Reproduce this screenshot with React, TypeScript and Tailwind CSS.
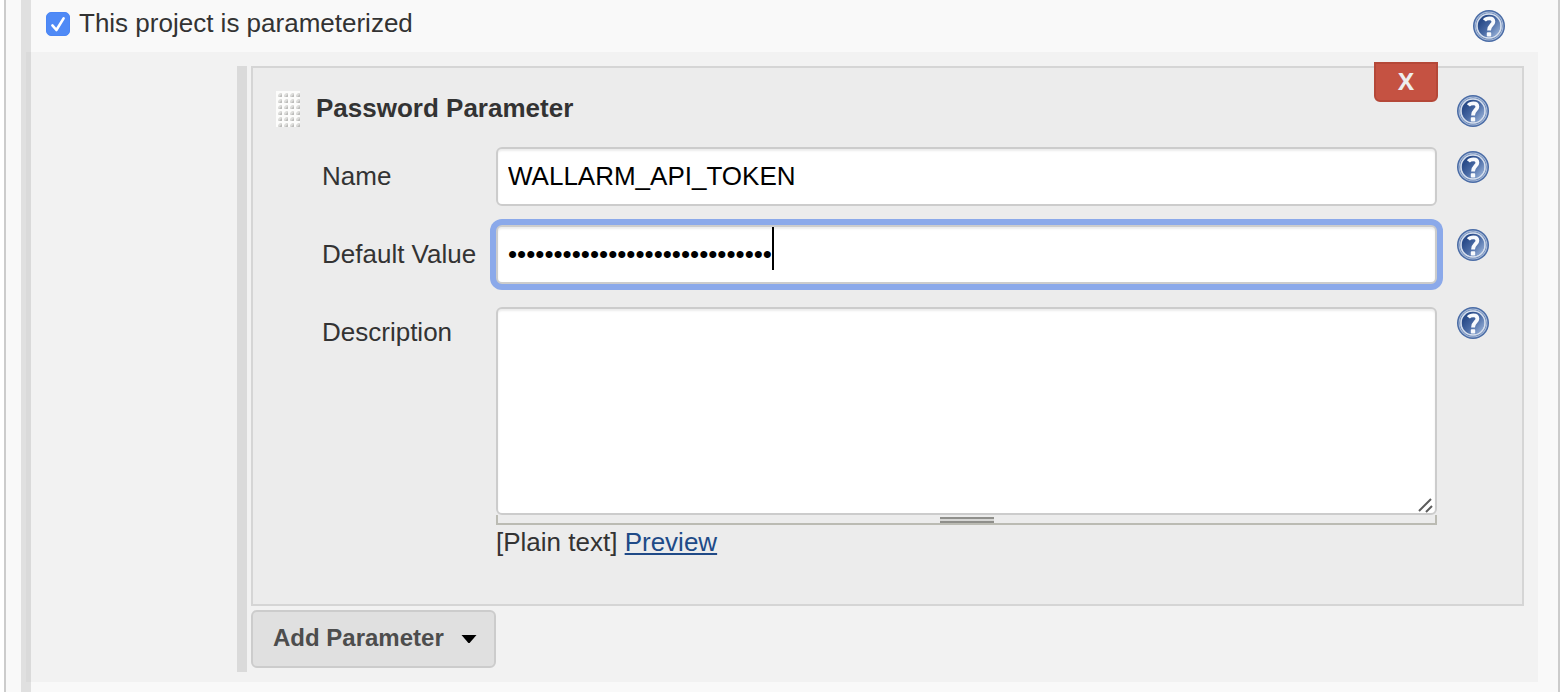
import { useState } from "react";
import type { ReactNode } from "react";

function HelpButton({ label, id }: { label: string; id: string }) {
  return (
    <button type="button" aria-label={label} className="block size-8 shrink-0">
      <svg viewBox="0 0 32 32" className="block size-8" aria-hidden="true">
        <defs>
          <linearGradient id={id} x1="0.1" y1="0.2" x2="0.9" y2="0.9">
            <stop offset="0.1" stopColor="#2a4c8a" />
            <stop offset="0.5" stopColor="#4a6ba5" />
            <stop offset="1" stopColor="#94aed6" />
          </linearGradient>
        </defs>
        <circle cx="16" cy="16" r="16" fill="#4a6ca6" />
        <circle cx="16" cy="16" r="13.9" fill="none" stroke="#a9bbd8" strokeWidth="1.2" />
        <circle cx="16" cy="16" r="12.9" fill="none" stroke="#7d97c2" strokeWidth="1" />
        <circle cx="16" cy="16" r="11.9" fill="none" stroke="#d6dfed" strokeWidth="1.8" />
        <circle cx="16" cy="16" r="11.2" fill={`url(#${id})`} />
        <path
          d="M11.4 10.4C12.6 8.8 14.6 8.4 16.4 8.4C19.2 8.4 20.4 9.9 20.4 11.7C20.4 14.9 16 15.2 16 20.4"
          fill="none"
          stroke="#f8fafd"
          strokeWidth="3.8"
        />
        <rect x="13.8" y="22.2" width="4.4" height="4.4" rx="0.8" fill="#f8fafd" />
      </svg>
    </button>
  );
}

function DragHandle() {
  const dots: ReactNode[] = [];
  for (let row = 0; row < 6; row++) {
    for (let col = 0; col < 4; col++) {
      const x = col * 6;
      const y = row * 6;
      dots.push(
        <g key={`${row}-${col}`}>
          <path d={`M${x + 2} ${y + 6}V${y + 4}L${x + 4} ${y + 2}H${x + 6}V${y + 6}Z`} fill="#dddddb" />
          <path d={`M${x + 3} ${y + 6}L${x + 6} ${y + 3}V${y + 6}Z`} fill="#bdbdbb" />
        </g>
      );
    }
  }
  return (
    <svg viewBox="0 0 24 36" className="h-9 w-6 shrink-0 cursor-move" aria-hidden="true">
      <rect width="24" height="36" fill="#fcfcfb" />
      {dots}
    </svg>
  );
}

function Field({ id, label, children }: { id: string; label: string; children: ReactNode }) {
  return (
    <div className="flex items-start">
      <label htmlFor={id} className="w-[174px] shrink-0 pt-3.5 leading-[30px]">
        {label}
      </label>
      <div className="min-w-0 flex-1">{children}</div>
      <div className="ml-5 pt-1">
        <HelpButton label={`Help for feature: ${label}`} id={`help-${id}`} />
      </div>
    </div>
  );
}

const box =
  "block w-full rounded-md border-2 border-[#cccccc] bg-white px-2.5 text-[26px] text-black shadow-[inset_0_2px_2px_rgba(0,0,0,0.075)] outline-none";

export default function App() {
  const [enabled, setEnabled] = useState(true);
  const [name, setName] = useState("WALLARM_API_TOKEN");
  const [secret, setSecret] = useState("x".repeat(29));
  const [description, setDescription] = useState("");

  return (
    <main className="min-h-screen bg-white pr-0.5 pl-1 font-['Liberation_Sans',Arial,sans-serif] text-[26px] text-[#333333]">
      <div className="flex min-h-screen border-x-2 border-[#cccccc] bg-[#f9f9f9] pl-[15px]">
        <div className="min-w-0 flex-1 border-l-10 border-[#e0e0e0] pr-5">
          <div className="flex h-13 items-start justify-between pr-[33px] pl-[15px]">
            <label className="flex items-start gap-[9px] pt-2 leading-[30px]">
              <span className="mt-1 grid size-6 shrink-0">
                <input
                  type="checkbox"
                  checked={enabled}
                  onChange={(e) => setEnabled(e.target.checked)}
                  className="peer col-start-1 row-start-1 size-6 appearance-none rounded-[5px] border border-[#b5b5b5] bg-white checked:border-[#4a86f5] checked:bg-[#4f8af6]"
                />
                <svg
                  viewBox="0 0 24 24"
                  className="pointer-events-none invisible col-start-1 row-start-1 size-6 peer-checked:visible"
                  aria-hidden="true"
                >
                  <path
                    d="M6.4 13.4L10.4 18L17.6 6.4"
                    fill="none"
                    stroke="#ffffff"
                    strokeWidth="2.6"
                    strokeLinecap="round"
                    strokeLinejoin="round"
                  />
                </svg>
              </span>
              This project is parameterized
            </label>
            <div className="pt-2.5">
              <HelpButton label="Help for feature: This project is parameterized" id="help-project" />
            </div>
          </div>

          <div className="-ml-[5px] border-l-5 border-[#dadada] bg-[#f2f2f2] pt-3.5 pr-3.5 pb-2.5 pl-[206px]">
            <div className="border-l-10 border-[#dadada] pb-1 pl-1">
              <section className="relative border-2 border-[#d5d5d5] bg-[#ececec] pt-[23px] pr-[33px] pb-[46px] pl-[23px]">
                <button
                  type="button"
                  aria-label="Delete parameter"
                  className="absolute -top-1.5 right-[84px] h-10 w-16 rounded-b-md border-2 border-[#b54838] bg-[#c55242] pb-0.5 font-['Open_Sans',sans-serif] text-2xl leading-8 font-bold text-[#eeeeee]"
                >
                  X
                </button>

                <div className="flex items-start">
                  <DragHandle />
                  <h2 className="ml-4 flex-1 pt-0.5 leading-[30px] font-bold">Password Parameter</h2>
                  <div className="pt-1">
                    <HelpButton label="Help for feature: Password Parameter" id="help-parameter" />
                  </div>
                </div>

                <div className="mt-5 flex flex-col gap-[19px] pl-[46px]">
                  <Field id="name" label="Name">
                    <input
                      id="name"
                      type="text"
                      value={name}
                      onChange={(e) => setName(e.target.value)}
                      className={`${box} h-[59px]`}
                    />
                  </Field>

                  <Field id="default" label="Default Value">
                    <div className="relative">
                      <input
                        id="default"
                        type="password"
                        value={secret}
                        onChange={(e) => setSecret(e.target.value)}
                        className={`${box} h-[59px] ring-6 ring-[#8ba9ea] caret-transparent`}
                      />
                      <span className="pointer-events-none absolute top-0.5 left-[276px] h-[43px] w-0.5 bg-black" />
                    </div>
                  </Field>

                  <Field id="description" label="Description">
                    <div className="grid pt-1">
                      <textarea
                        id="description"
                        value={description}
                        onChange={(e) => setDescription(e.target.value)}
                        className={`${box} col-start-1 row-start-1 h-52 resize-none`}
                      />
                      <svg
                        viewBox="0 0 16 16"
                        className="pointer-events-none col-start-1 row-start-1 mr-1 mb-0.5 size-4 self-end justify-self-end"
                        aria-hidden="true"
                      >
                        <path d="M2 14L14 2M9 15L15 9" stroke="#5c5c5c" strokeWidth="2" fill="none" />
                      </svg>
                    </div>
                    <div className="flex h-2.5 justify-center border-x-2 border-b-2 border-[#bbbbb3] pt-0.5">
                      <div className="h-1.5 w-[54px] border-y-2 border-[#8f8f8b] bg-[#d6d6d4]" />
                    </div>
                    <p className="mt-px leading-[32px]">
                      [Plain text]{" "}
                      <a href="#preview" className="text-[#204a87] underline decoration-2 underline-offset-2">
                        Preview
                      </a>
                    </p>
                  </Field>
                </div>
              </section>

              <button
                type="button"
                className="mt-1 flex h-[58px] items-center gap-[17px] rounded-md border-2 border-[#cccccc] bg-[#e0e0e0] pr-[17px] pb-0.5 pl-5 text-2xl font-bold text-[#4d4d4d]"
              >
                Add Parameter
                <svg viewBox="0 0 16 8" className="mt-0.5 h-2 w-4" aria-hidden="true">
                  <path d="M0.5 0H15.5L8.6 8H7.4Z" fill="#000000" />
                </svg>
              </button>
            </div>
          </div>
        </div>
      </div>
    </main>
  );
}
